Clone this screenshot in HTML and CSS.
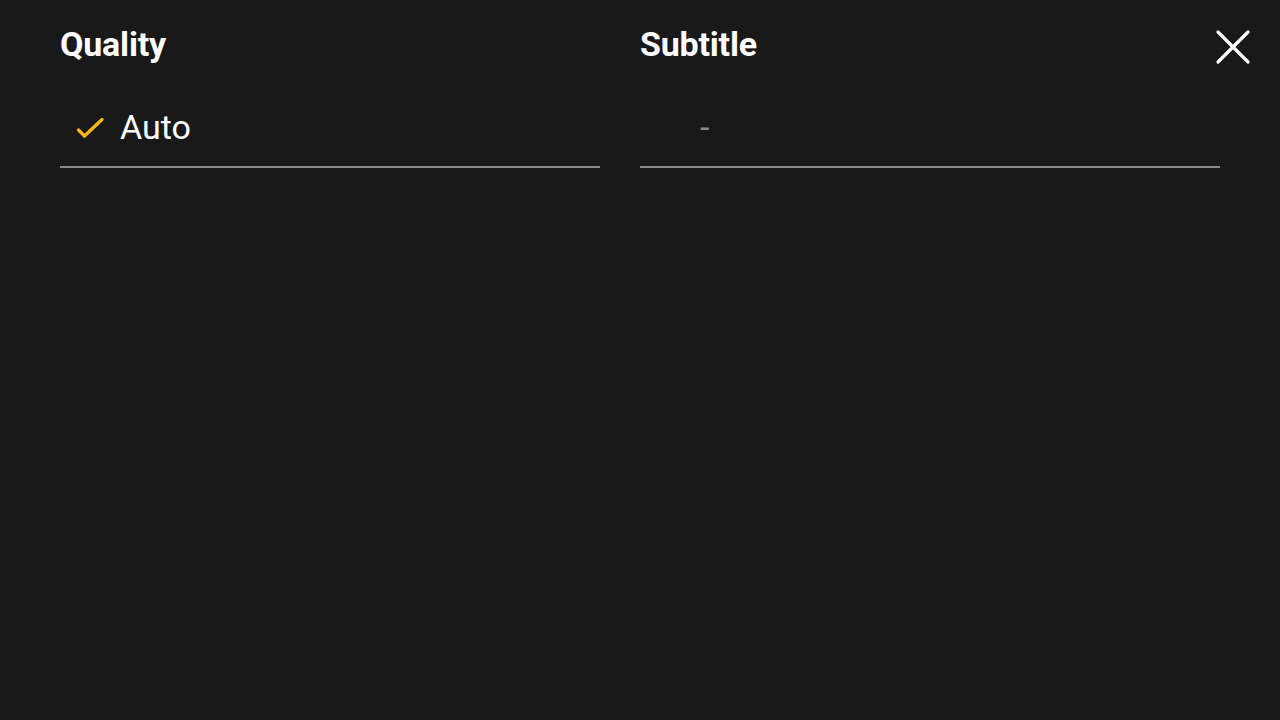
FILE: index.html
```html
<!DOCTYPE html>
<html>
<head>
<meta charset="utf-8">
<link rel="stylesheet" href="styles.css">
</head>
<body>
<div class="panel">
  <section class="col col-quality">
    <h2 class="heading">Quality</h2>
    <div class="option selected">
      <span class="check">
        <svg width="30" height="24" viewBox="0 0 30 24"><path d="M3.5 14 L9.5 20 L27 3.5" fill="none" stroke="#f6b719" stroke-width="3.4" stroke-linecap="round" stroke-linejoin="round"/></svg>
      </span>
      <span class="label">Auto</span>
    </div>
  </section>
  <section class="col col-subtitle">
    <h2 class="heading">Subtitle</h2>
    <div class="option">
      <span class="check"></span>
      <span class="label dim">-</span>
    </div>
  </section>
  <button class="close" aria-label="Close">
    <svg width="36" height="36" viewBox="0 0 36 36"><path d="M3 3 L33 33 M33 3 L3 33" stroke="#fff" stroke-width="3.2" stroke-linecap="round"/></svg>
  </button>
</div>
</body>
</html>
```
FILE: styles.css
```css
html, body {
  margin: 0;
  padding: 0;
  background: #191919;
  width: 1280px;
  height: 720px;
  overflow: hidden;
  font-family: Roboto, "Liberation Sans", sans-serif;
  color: #fff;
}
.panel {
  display: flex;
  gap: 40px;
  padding: 24px 60px 0 60px;
  position: relative;
  height: 720px;
  box-sizing: border-box;
}
.col-quality { width: 540px; }
.col-subtitle { width: 580px; }
.heading {
  margin: 0;
  font-size: 34px;
  font-weight: 700;
  line-height: 40px;
  letter-spacing: -0.2px;
}
.option {
  display: flex;
  align-items: center;
  height: 77px;
  margin-top: 27px;
  border-bottom: 2px solid #8a8a8a;
  box-sizing: border-box;
}
.check {
  width: 60px;
  display: flex;
  justify-content: center;
  padding-bottom: 2px;
}
.check svg { display: block; }
.label {
  font-size: 34px;
  font-weight: 400;
  padding-bottom: 4px;
}
.label.dim {
  color: #8a8a8a;
}
.close {
  position: absolute;
  top: 29px;
  left: 1215px;
  padding: 0;
  border: 0;
  background: none;
  cursor: pointer;
}
.close svg { display: block; }
```
